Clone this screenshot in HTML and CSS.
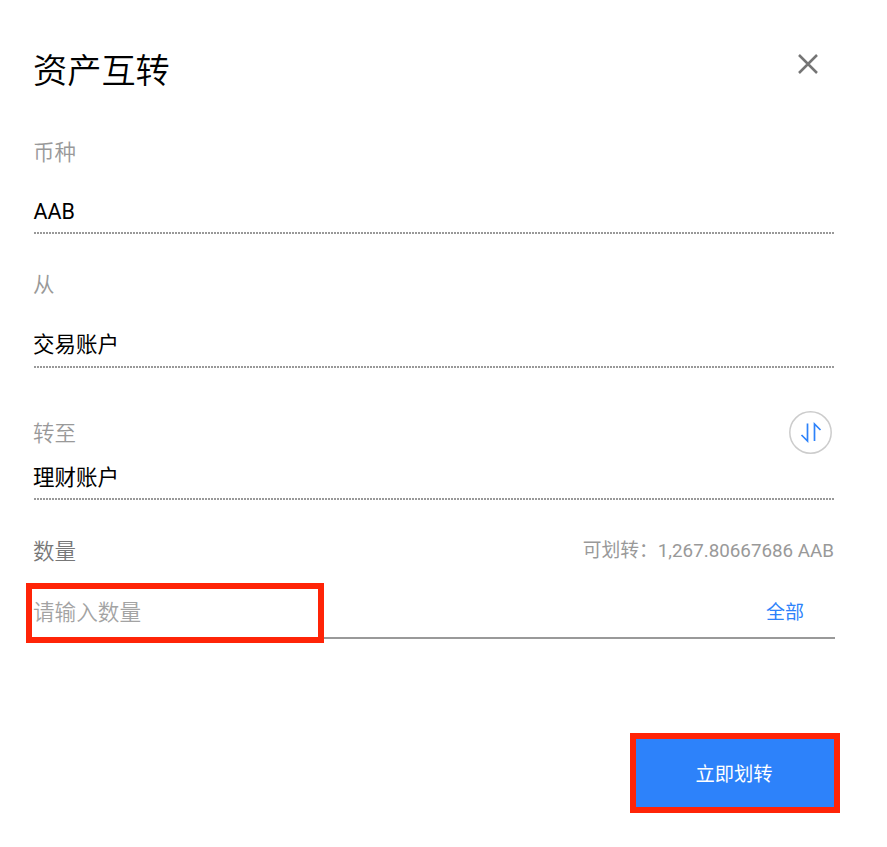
FILE: index.html
```html
<!DOCTYPE html>
<html lang="zh-CN">
<head><meta charset="utf-8"><title>资产互转</title><link rel="stylesheet" href="styles.css"></head>
<body>
<main class="dialog">
<header class="header"><h1>资产互转</h1>
<button class="close" aria-label="关闭"><svg width="20" height="20" viewBox="0 0 20 20"><path d="M1 1l18 18M19 1L1 19" fill="none" stroke="#757575" stroke-width="2.500"/></svg></button></header>
<section class="field coin"><span class="label">币种</span><span class="value latin">AAB</span></section>
<section class="field from"><span class="label">从</span><span class="value">交易账户</span></section>
<section class="field to"><div class="row"><span class="label">转至</span><button class="swap" aria-label="互换"><svg width="43" height="43" viewBox="0 0 43 43" fill="none"><circle cx="21.500" cy="21.500" r="20.700" stroke="#ccc" stroke-width="1.500"/><path d="M18.500 12.500v17.500l-6-6M25.500 30V13l6 6" stroke="#2d82fa" stroke-width="1.700"/></svg></button></div><span class="value">理财账户</span></section>
<section class="amount"><div class="row"><span class="label dark">数量</span><span class="available">可划转：1,267.80667686 AAB</span></div>
<div class="entry"><div class="placeholder">请输入数量</div><button class="all">全部</button></div></section>
<footer class="footer"><button class="submit">立即划转</button></footer>
</main>
</body></html>
```
FILE: styles.css
```css
*{box-sizing:border-box}
body{margin:0;background:#fff;color:#000;font-family:Roboto,"Noto Sans CJK SC",sans-serif}
button{border:0;background:none;padding:0;margin:0;font:inherit}
svg{display:block}
.dialog{width:887px;height:847px;padding:46px 52px 0 33px}
.header{display:flex;justify-content:space-between;height:80px}
h1{margin:0;padding-top:1px;font-size:34.200px;line-height:48px;font-weight:350}
.close{width:20px;height:20px;margin:8px 17px 0 0}
.field{display:flex;flex-direction:column;position:relative}
.field::after{content:"";position:absolute;left:1px;right:0;bottom:0;height:2px;background:repeating-linear-gradient(90deg,#999 0 2px,#fff 2px 3px)}
.label{font-size:21.500px;line-height:30px;color:#999;height:30px;font-weight:350}
.dark{color:#777}
.value{font-size:21.500px;line-height:30px;height:30px}
.latin{padding-left:.5px}
.coin{height:108px;padding-top:12px}
.coin .value{margin-top:29px}
.from .value{margin-top:30px}
.from{height:134px;padding-top:36px}
.to{height:132px;padding-top:43px}
.row{display:flex;justify-content:space-between;align-items:center}
.to .row{height:43px}
.to .label{margin-top:2px}
.swap{margin-right:3px}
.to .value{margin-top:9px}
.amount{padding-top:37px}
.amount .row{height:30px}
.available{font-size:18.800px;line-height:28px;color:#999;margin:-2px 1px 0 0}
.entry{height:72px;margin-left:1px;display:flex;justify-content:space-between;border-bottom:2px solid #999}
.placeholder{width:298px;height:60px;margin:16px 0 0 -8px;border:6px solid #ff2407;padding-left:1px;font-size:21.600px;line-height:48px;color:#a3a3a3;font-weight:350}
.all{color:#2d82fa;font-size:19px;line-height:28px;height:28px;margin:32px 31px 0 0}
.footer{display:flex;justify-content:flex-end;padding-top:94px}
.submit{width:210px;height:80px;margin-right:-5px;border:6px solid #ff2407;background:#2d82fa;color:#fff;font-size:19.300px;padding:0 2px 0 0}
```
